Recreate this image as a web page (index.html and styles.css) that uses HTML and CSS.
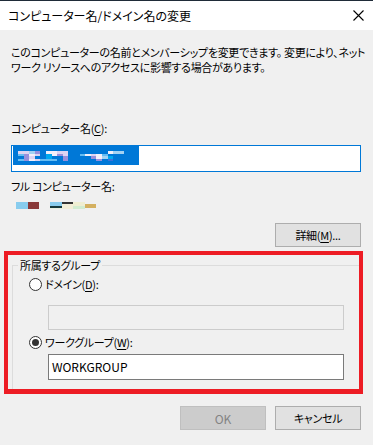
FILE: index.html
```html
<!DOCTYPE html>
<html>
	<head>
		<meta charset="UTF-8">
		<title>コンピューター名/ドメイン名の変更</title>
		<link rel="stylesheet" href="styles.css">
	</head>
	<body>
		<div class="titlebar">
			<span class="title">コンピューター名/ドメイン名の変更</span>
			<svg class="close" width="11" height="11" viewBox="0 0 11 11">
				<path d="M0.5 0.5L10.5 10.5M10.5 0.5L0.5 10.5" stroke="#000" stroke-width="1.1" fill="none"/>
			</svg>
		</div>

		<div class="content">
			<p class="desc">このコンピューターの名前とメンバーシップを変更できます。 変更により、ネット<br>ワーク リソースへのアクセスに影響する場合があります。</p>

			<div class="label label_name">コンピューター名(<u>C</u>):</div>
			<div class="namebox">
				<div class="sel">
					<div class="mosaic">
						<i class="l"></i><i class="l"></i><i class="b"></i><i class="p"></i><i></i><i class="w"></i><i class="w"></i><i class="l"></i><i class="l"></i><i></i><i></i><i></i><i></i><i></i><i></i><i></i><i class="w"></i><i class="b"></i><i class="b"></i><i></i>
						<i class="s"></i><i class="p"></i><i class="w"></i><i class="l"></i><i></i><i class="c"></i><i class="w"></i><i class="p"></i><i class="l"></i><i></i><i></i><i class="s"></i><i class="w"></i><i class="l"></i><i class="w"></i><i class="s"></i><i></i><i></i><i></i><i></i>
						<i></i><i class="p"></i><i class="l"></i><i></i><i></i><i class="c"></i><i></i><i></i><i class="p"></i><i></i><i></i><i></i><i></i><i class="p"></i><i class="w"></i><i class="b"></i><i class="c"></i><i></i><i></i><i></i>
						<i class="s"></i><i class="p"></i><i class="w"></i><i class="l"></i><i class="s"></i><i class="s"></i><i class="s"></i><i></i><i class="p"></i><i></i><i></i><i></i><i></i><i></i><i class="p"></i><i></i><i class="d"></i><i></i><i></i><i></i>
					</div>
				</div>
			</div>

			<div class="label label_full">フル コンピューター名:</div>
			<div class="fullname">
				<i class="f1"></i><i class="f2"></i><i class="gap"></i><i class="f3"></i><i class="f4"></i><i class="f5"></i><i class="f6"></i>
			</div>

			<div class="more_row">
				<button class="btn">詳細(<u>M</u>)...</button>
			</div>

			<div class="group_wrap">
				<fieldset class="group">
					<legend>所属するグループ</legend>
					<div class="group_body">
						<div class="radio_row">
							<span class="radio"></span>
							<span>ドメイン(<u>D</u>):</span>
						</div>
						<div class="field field_off"></div>
						<div class="radio_row radio_row2">
							<span class="radio checked"></span>
							<span>ワークグループ(<u>W</u>):</span>
						</div>
						<div class="field field_on">WORKGROUP</div>
					</div>
				</fieldset>
			</div>

			<div class="btn_row">
				<button class="btn btn_off">OK</button>
				<button class="btn">キャンセル</button>
			</div>
		</div>
	</body>
</html>
```

FILE: styles.css
```css
*{padding: 0;margin: 0;box-sizing: border-box;}

body{width: 373px;height: 445px;overflow: hidden;background: #f0f0f0;color: #000;
	font: 11px/15px "Noto Sans CJK JP", "Noto Sans", sans-serif;font-feature-settings: "palt";letter-spacing: -0.3px;}

u{text-decoration: underline;text-underline-offset: 2px;}
i{display: block;}

.titlebar{height: 30px;border-top: 1px solid #1f2b38;background: #fff;display: flex;align-items: center;justify-content: space-between;padding: 0 9px 0 8px;font-size: 12px;letter-spacing: 0;}
.titlebar .close{display: block;}

.content{padding: 15px 12px 0 11px;display: flex;flex-direction: column;}

.desc{line-height: 15px;white-space: nowrap;}

.label_name{margin-top: 46px;}
.label_full{margin-top: 7px;}

.namebox{margin-top: 9px;height: 27px;border: 1px solid #0078d7;background: #fff;padding: 0 1px;}
.namebox .sel{width: 126px;height: 19px;background: #0078d7;}
.mosaic{display: grid;grid-template-columns: repeat(20, 5.6px);grid-auto-rows: 2.6px;padding: 5px 0 0 5px;}
.mosaic .l{background: #dcd4f2;}
.mosaic .w{background: #f4f0fa;}
.mosaic .b{background: #a4d2f2;}
.mosaic .p{background: #9890dc;}
.mosaic .c{background: #00a8f0;}
.mosaic .s{background: #66bdf2;}
.mosaic .d{background: #3f70d8;}

.fullname{display: flex;align-items: flex-start;margin-top: 8px;height: 7px;padding-left: 5px;}
.fullname .f1{width: 12px;height: 7px;background: #88ccee;}
.fullname .f2{width: 11px;height: 7px;background: #8a3a3a;}
.fullname .gap{width: 11px;}
.fullname .f3{width: 12px;height: 7px;background: linear-gradient(#88ccee 0 4px, #15393c 4px 6px, #e8f0e0 6px);}
.fullname .f4{width: 11px;height: 7px;background: linear-gradient(#333 0 2px, #f2eed8 2px);}
.fullname .f5{width: 12px;height: 7px;background: linear-gradient(#efeed2 0 4px, #d2ecd0 4px);}
.fullname .f6{width: 11px;height: 4px;margin-top: 2px;background: #d4b060;}

.more_row{display: flex;justify-content: flex-end;margin-top: 14px;}

.btn{width: 86px;height: 24px;border: 1px solid #adadad;background: #e1e1e1;color: #000;font: inherit;font-feature-settings: "palt";letter-spacing: inherit;}
.btn_off{border-color: #bfbfbf;background: #cccccc;color: #838383;font-size: 12px;letter-spacing: 0;}

.group_wrap{position: relative;margin-top: 11px;margin-left: 1px;}
.group_wrap::after{content: "";position: absolute;left: -8px;right: -2px;top: -7px;bottom: -4px;border: 4px solid #ed1c24;border-bottom-width: 5px;}

.group{border: 1px solid #dcdcdc;padding: 0;}
.group legend{margin-left: 5px;padding: 0 2px;line-height: 15px;}

.group_body{padding: 4px 0 9px 16px;}

.radio_row{display: flex;align-items: center;gap: 3px;height: 15px;}
.radio_row2{margin-top: 5px;}

.radio{width: 13px;height: 13px;border: 1px solid #333;border-radius: 50%;background: #fff;display: flex;align-items: center;justify-content: center;}
.radio.checked::before{content: "";width: 7px;height: 7px;border-radius: 50%;background: #333;}

.field{margin-left: 19px;width: 296px;}
.field_off{margin-top: 13px;height: 25px;border: 1px solid #cccccc;background: #f0f0f0;}
.field_on{margin-top: 4px;height: 26px;border: 1px solid #7a7a7a;background: #fff;padding: 4px 0 0 3px;line-height: 15px;font-size: 12px;letter-spacing: 0;}

.btn_row{display: flex;justify-content: flex-end;gap: 9px;margin-top: 16px;}
```
